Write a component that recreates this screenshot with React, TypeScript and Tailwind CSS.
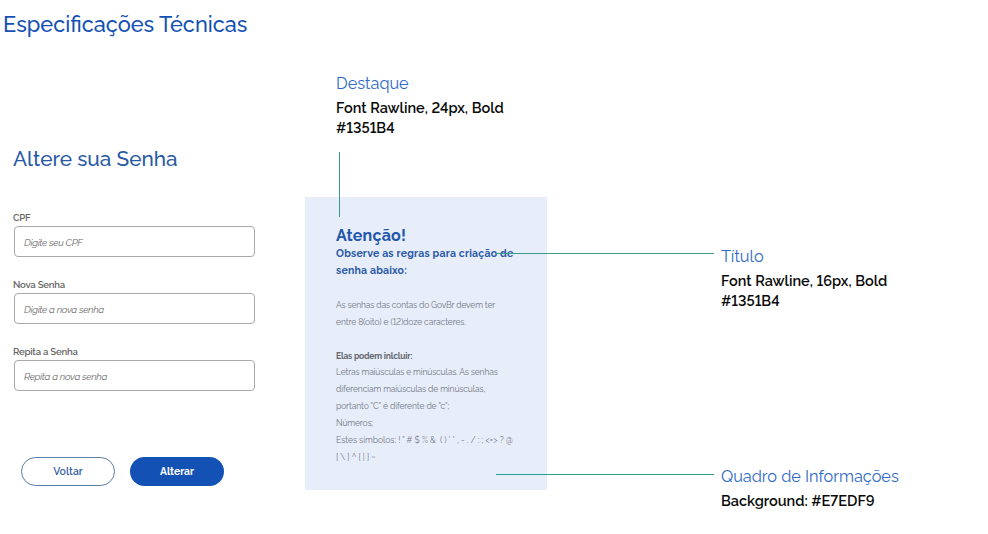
import React from "react";

type FieldProps = { label: string; hint: string };

function Field({ label, hint }: FieldProps) {
  return (
    <label className="block h-[67px]">
      <span className="block h-4 whitespace-nowrap text-[9.6px] leading-4 font-semibold tracking-[-0.22px] text-[#666]">{label}</span>
      <span className="ml-px flex h-[31px] w-[241px] items-center rounded-[4px] border border-[#a9a9a9] pt-[3px] pl-[9px]">
        <span className="whitespace-nowrap text-[9.8px] tracking-[-0.34px] text-[#6c6c6c] italic">{hint}</span>
      </span>
    </label>
  );
}

type NoteProps = { title: string; lines: string[] };

function Note({ title, lines }: NoteProps) {
  return (
    <div className="whitespace-nowrap lining-nums">
      <h3 className="mb-0.5 text-[16.3px] leading-6 font-normal text-[#2e6ac6]">{title}</h3>
      {lines.map((l) => (
        <p key={l} className="text-[14.5px] leading-5 font-semibold text-[#0a0a0a]">{l}</p>
      ))}
    </div>
  );
}

const rules = [
  { text: "As senhas das contas do GovBr devem ter", style: "font-normal tracking-[-0.16px] text-[#747986]" },
  { text: "entre 8(oito) e (12)doze caracteres.", style: "font-normal tracking-[-0.1px] text-[#747986]" },
  { text: "", style: "" },
  { text: "Elas podem inlcluir:", style: "font-bold tracking-[-0.2px] text-[#62666f]" },
  { text: "Letras maiúsculas e minúsculas. As senhas", style: "font-normal tracking-[-0.15px] text-[#747986]" },
  { text: "diferenciam maiúsculas de minúsculas,", style: "font-normal tracking-[-0.13px] text-[#747986]" },
  { text: "portanto \"C\" é diferente de \"c\";", style: "font-normal tracking-[-0.1px] text-[#747986]" },
  { text: "Números;", style: "font-normal tracking-[-0.15px] text-[#747986]" },
  { text: "Estes símbolos: ! \" # $ % &  ( ) ' * , - . / : ; <=> ? @", style: "font-normal tracking-[-0.03px] text-[#747986]" },
  { text: "[ \\ ] ^ { | } ~", style: "font-normal text-[#747986]" },
];

export default function App() {
  return (
    <main className="relative flex h-[534px] w-[988px] overflow-hidden bg-white font-['Raleway','Lato',sans-serif]">
      <section className="w-[305px] shrink-0">
        <h1 className="mt-[9px] ml-[3px] h-8 whitespace-nowrap text-[21.75px] leading-8 font-medium text-[#1351b4]">Especificações Técnicas</h1>
        <h2 className="mt-[102px] ml-[13px] h-8 whitespace-nowrap text-[20.75px] leading-8 font-medium text-[#2859a5]">Altere sua Senha</h2>
        <form className="mt-[35px] ml-[13px]">
          <Field label="CPF" hint="Digite seu CPF" />
          <Field label="Nova Senha" hint="Digite a nova senha" />
          <Field label="Repita a Senha" hint="Repita a nova senha" />
          <div className="mt-[46px] ml-2 flex gap-[15px]">
            <button type="button" className="h-[29px] w-[94px] rounded-full border border-[#5b7da8] pt-px text-[10.5px] font-semibold text-[#3a64a4]">Voltar</button>
            <button type="button" className="h-[29px] w-[94px] rounded-full bg-[#1351b4] pt-px text-[10.3px] font-bold text-white">Alterar</button>
          </div>
        </form>
      </section>
      <section className="w-[242px] shrink-0">
        <div className="mt-[72px] ml-[31px] h-[125px]">
          <Note title="Destaque" lines={["Font Rawline, 24px, Bold", "#1351B4"]} />
        </div>
        <article className="h-[293px] bg-[#e7edf9] pt-7 pl-[31px] whitespace-nowrap lining-nums">
          <h2 className="h-5 text-[16px] leading-[22px] font-bold tracking-[0.2px] text-[#2156ac]">Atenção!</h2>
          <p className="text-[10.5px] leading-[17px] font-bold tracking-[0.2px] text-[#2b5aa5]">Observe as regras para criação de</p>
          <p className="text-[10.5px] leading-[17px] font-bold tracking-[0.2px] text-[#2b5aa5]">senha abaixo:</p>
          <div className="mt-[18px]">
            {rules.map((r, i) => (
              <p key={i} className={`h-[16.85px] text-[8.5px] leading-[17px] whitespace-pre ${r.style}`}>{r.text}</p>
            ))}
          </div>
        </article>
      </section>
      <aside className="ml-[174px] pt-[245px]">
        <div className="h-[220px]">
          <Note title="Título" lines={["Font Rawline, 16px, Bold", "#1351B4"]} />
        </div>
        <Note title="Quadro de Informações" lines={["Background: #E7EDF9"]} />
      </aside>
      <i className="absolute top-[152px] left-[339px] h-[65px] w-px bg-[#3b9a8b]" />
      <i className="absolute top-[253px] left-[496px] h-px w-[218px] bg-[#3b9a8b]" />
      <i className="absolute top-[474px] left-[496px] h-px w-[218px] bg-[#22a090]" />
    </main>
  );
}
